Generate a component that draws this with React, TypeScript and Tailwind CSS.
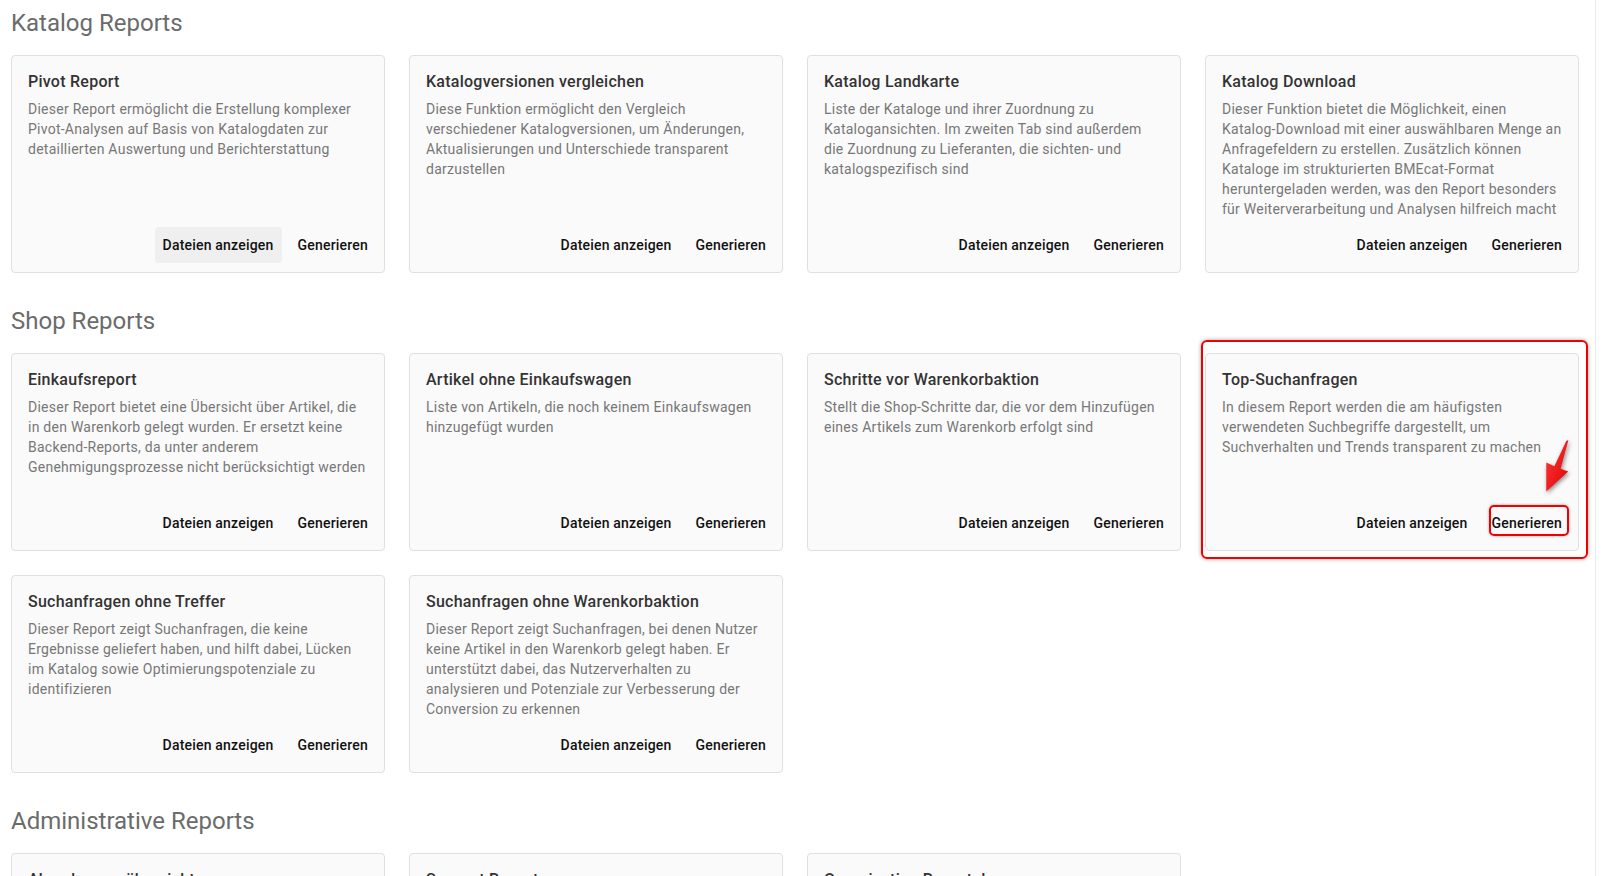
import React from "react";

type Report = {
  title: string;
  description: string;
  highlight?: boolean;
};

const katalogReports: Report[] = [
  {
    title: "Pivot Report",
    description:
      "Dieser Report ermöglicht die Erstellung komplexer Pivot-Analysen auf Basis von Katalogdaten zur detaillierten Auswertung und Berichterstattung",
  },
  {
    title: "Katalogversionen vergleichen",
    description:
      "Diese Funktion ermöglicht den Vergleich verschiedener Katalogversionen, um Änderungen, Aktualisierungen und Unterschiede transparent darzustellen",
  },
  {
    title: "Katalog Landkarte",
    description:
      "Liste der Kataloge und ihrer Zuordnung zu Katalogansichten. Im zweiten Tab sind außerdem die Zuordnung zu Lieferanten, die sichten- und katalogspezifisch sind",
  },
  {
    title: "Katalog Download",
    description:
      "Dieser Funktion bietet die Möglichkeit, einen Katalog-Download mit einer auswählbaren Menge an Anfragefeldern zu erstellen. Zusätzlich können Kataloge im strukturierten BMEcat-Format heruntergeladen werden, was den Report besonders für Weiterverarbeitung und Analysen hilfreich macht",
  },
];

const shopReports: Report[] = [
  {
    title: "Einkaufsreport",
    description:
      "Dieser Report bietet eine Übersicht über Artikel, die in den Warenkorb gelegt wurden. Er ersetzt keine Backend-Reports, da unter anderem Genehmigungsprozesse nicht berücksichtigt werden",
  },
  {
    title: "Artikel ohne Einkaufswagen",
    description:
      "Liste von Artikeln, die noch keinem Einkaufswagen hinzugefügt wurden",
  },
  {
    title: "Schritte vor Warenkorbaktion",
    description:
      "Stellt die Shop-Schritte dar, die vor dem Hinzufügen eines Artikels zum Warenkorb erfolgt sind",
  },
  {
    title: "Top-Suchanfragen",
    description:
      "In diesem Report werden die am häufigsten verwendeten Suchbegriffe dargestellt, um Suchverhalten und Trends transparent zu machen",
    highlight: true,
  },
  {
    title: "Suchanfragen ohne Treffer",
    description:
      "Dieser Report zeigt Suchanfragen, die keine Ergebnisse geliefert haben, und hilft dabei, Lücken im Katalog sowie Optimierungspotenziale zu identifizieren",
  },
  {
    title: "Suchanfragen ohne Warenkorbaktion",
    description:
      "Dieser Report zeigt Suchanfragen, bei denen Nutzer keine Artikel in den Warenkorb gelegt haben. Er unterstützt dabei, das Nutzerverhalten zu analysieren und Potenziale zur Verbesserung der Conversion zu erkennen",
  },
];

const adminReports: Report[] = [
  { title: "Abrechnungsübersicht", description: "Übersicht der Abrechnungen je Zeitraum und Organisation" },
  { title: "Support Report", description: "Übersicht der Supportanfragen und deren Bearbeitungsstatus" },
  { title: "Organisation Reportal", description: "Übersicht der Organisationen und ihrer Einstellungen" },
];

function ArrowMark() {
  return (
    <svg
      className="absolute left-[335px] top-[84px] drop-shadow-[1px_2px_2px_rgba(0,0,0,0.45)]"
      width="36"
      height="60"
      viewBox="0 0 36 60"
    >
      <defs>
        <linearGradient id="arrowRed" x1="0" y1="0" x2="1" y2="1">
          <stop offset="0" stopColor="#ff3b3b" />
          <stop offset="1" stopColor="#e00000" />
        </linearGradient>
      </defs>
      <polygon
        points="28.4,3.2 20.6,31.7 28.2,34.6 6.3,54.4 6.3,25.6 14.4,29.2 26.4,3.8"
        fill="url(#arrowRed)"
      />
    </svg>
  );
}

function ReportCard({ report, first }: { report: Report; first?: boolean }) {
  return (
    <div className="relative flex">
      {report.highlight && (
        <div className="pointer-events-none absolute -left-[4px] -top-[13px] -right-[9px] -bottom-[8px] rounded-[6px] border-2 border-[#f20000] shadow-[0_0_4px_rgba(0,0,0,0.35)]" />
      )}
      <div className="flex w-full flex-col rounded border border-[#e0e0e0] bg-[#fafafa]">
        <div className="px-4 pt-4">
          <h3 className="mb-[7px] text-base font-medium leading-5 tracking-[0.25px] text-[#333333]">
            {report.title}
          </h3>
          <p className="min-h-[100px] text-sm leading-5 tracking-[0.25px] text-[#777777]">
            {report.description}
          </p>
        </div>
        <div className="mt-auto flex justify-end gap-2 px-2 pt-2 pb-[9px]">
          <button
            className={`h-9 rounded px-2 text-sm font-medium tracking-[0.2px] text-[#111111] ${
              first ? "bg-[#efefef]" : ""
            }`}
          >
            Dateien anzeigen
          </button>
          <button className="relative h-9 rounded px-2 text-sm font-medium tracking-[0.2px] text-[#111111]">
            Generieren
            {report.highlight && (
              <span className="pointer-events-none absolute left-[5px] top-0 right-[1px] h-[31px] rounded-[5px] border-2 border-[#f20000] shadow-[0_0_3px_rgba(0,0,0,0.35)]" />
            )}
          </button>
        </div>
      </div>
      {report.highlight && <ArrowMark />}
    </div>
  );
}

function Section({
  title,
  reports,
  firstSection,
}: {
  title: string;
  reports: Report[];
  firstSection?: boolean;
}) {
  return (
    <section className={firstSection ? "" : "mt-8"}>
      <h2 className="mb-4 text-2xl leading-8 text-[#6b6b6b]">{title}</h2>
      <div className="grid w-[1568px] grid-cols-4 gap-6">
        {reports.map((r, i) => (
          <ReportCard key={r.title} report={r} first={firstSection && i === 0} />
        ))}
      </div>
    </section>
  );
}

export default function App() {
  return (
    <div
      className="flex h-[876px] w-full overflow-hidden bg-white"
      style={{ fontFamily: "Roboto, 'Liberation Sans', sans-serif" }}
    >
      <main className="w-[1596px] shrink-0 border-r border-[#ebebeb] pl-[11px] pt-[7px]">
        <Section title="Katalog Reports" reports={katalogReports} firstSection />
        <Section title="Shop Reports" reports={shopReports} />
        <Section title="Administrative Reports" reports={adminReports} />
      </main>
      <div className="flex-1 bg-white" />
    </div>
  );
}
